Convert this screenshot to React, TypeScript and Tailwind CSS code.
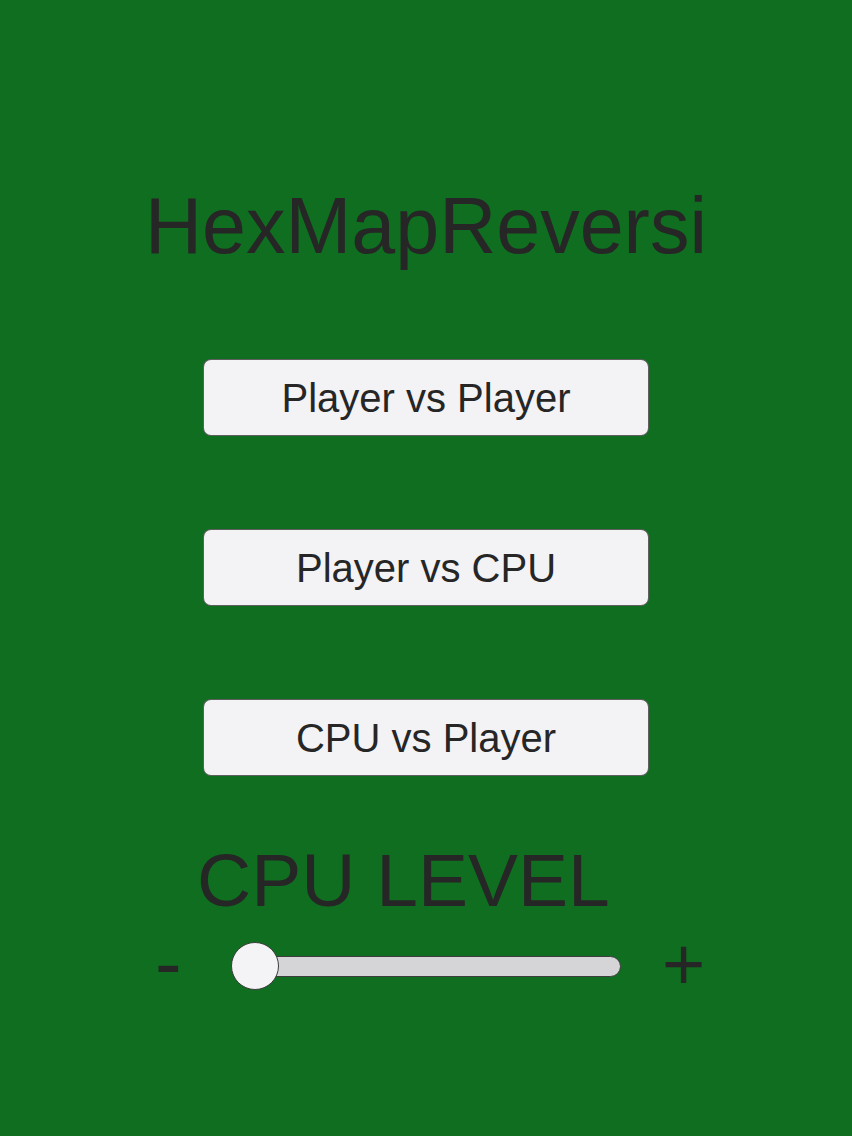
import React, { useState } from "react";

const modes = ["Player vs Player", "Player vs CPU", "CPU vs Player"];

const App = () => {
  const [level] = useState(0);

  return (
    <div
      className="w-full h-[1136px] bg-[#0f6e1f] flex flex-col items-center text-[#262626]"
      style={{ fontFamily: '"Liberation Sans", Arial, sans-serif' }}
    >
      {/* Title */}
      <h1 className="mt-[186px] text-[79px] leading-none">HexMapReversi</h1>

      {/* Mode buttons */}
      <div className="mt-[94px] flex flex-col gap-[93px]">
        {modes.map((m) => (
          <button
            key={m}
            className="w-[446px] h-[77px] rounded-[8px] bg-[#f3f2f4] border border-[#3a3a3a]/80 text-[40px] leading-none flex items-center justify-center"
          >
            {m}
          </button>
        ))}
      </div>

      {/* CPU level */}
      <div className="w-full mt-[67px] pl-[197px] text-[75px] leading-none">
        CPU LEVEL
      </div>

      <div className="w-full mt-[24px] pl-[155px] flex items-center h-[48px]">
        <span className="text-[80px] leading-none w-[27px] -mt-[6px]">-</span>
        <div className="relative ml-[49px] w-[390px] h-[48px] flex items-center">
          <div className="ml-[10px] w-[380px] h-[21px] rounded-full bg-[#d5d4d6] border border-[#3d3d3d]" />
          <div
            className="absolute top-0 w-[48px] h-[48px] rounded-full bg-[#f4f4f6] border border-[#3d3d3d]"
            style={{ left: level * 34 }}
          />
        </div>
        <span className="ml-[41px] text-[74px] leading-none -mt-[2px]">+</span>
      </div>
    </div>
  );
};

export default App;
